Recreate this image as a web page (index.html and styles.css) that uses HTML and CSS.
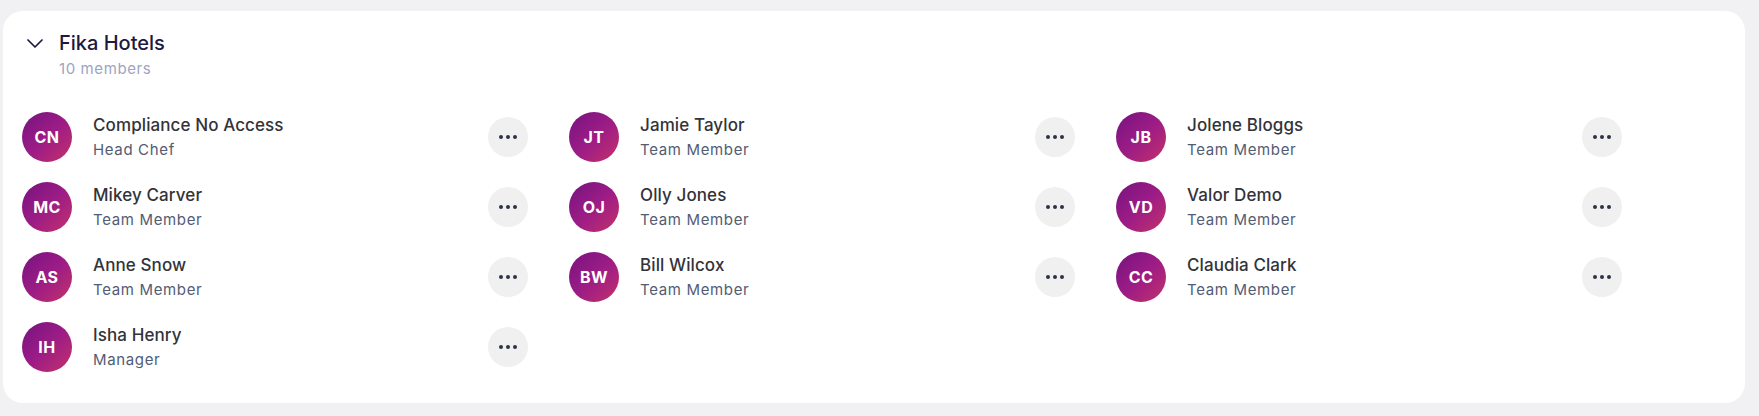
FILE: index.html
```html
<!DOCTYPE html>
<html lang="en">
<head>
  <meta charset="UTF-8">
  <meta name="viewport" content="width=device-width, initial-scale=1.0">
  <title>Fika Hotels - Members</title>
  <link rel="stylesheet" href="styles.css">
</head>
<body>
  <div class="card">
    <div class="group-head">
      <svg class="chevron" width="16" height="9" viewBox="0 0 16 9">
        <path d="M1 1 L8 8 L15 1" fill="none" stroke="#1f1840" stroke-width="1.7" stroke-linecap="round" stroke-linejoin="round"/>
      </svg>
      <div>
        <div class="group-title">Fika Hotels</div>
        <div class="group-count">10 members</div>
      </div>
    </div>

    <div class="members">
      <div class="member">
        <div class="avatar">CN</div>
        <div class="info">
          <div class="name">Compliance No Access</div>
          <div class="role">Head Chef</div>
        </div>
        <button class="more"><span></span><span></span><span></span></button>
      </div>
      <div class="member">
        <div class="avatar">JT</div>
        <div class="info">
          <div class="name">Jamie Taylor</div>
          <div class="role">Team Member</div>
        </div>
        <button class="more"><span></span><span></span><span></span></button>
      </div>
      <div class="member">
        <div class="avatar">JB</div>
        <div class="info">
          <div class="name">Jolene Bloggs</div>
          <div class="role">Team Member</div>
        </div>
        <button class="more"><span></span><span></span><span></span></button>
      </div>

      <div class="member">
        <div class="avatar">MC</div>
        <div class="info">
          <div class="name">Mikey Carver</div>
          <div class="role">Team Member</div>
        </div>
        <button class="more"><span></span><span></span><span></span></button>
      </div>
      <div class="member">
        <div class="avatar">OJ</div>
        <div class="info">
          <div class="name">Olly Jones</div>
          <div class="role">Team Member</div>
        </div>
        <button class="more"><span></span><span></span><span></span></button>
      </div>
      <div class="member">
        <div class="avatar">VD</div>
        <div class="info">
          <div class="name">Valor Demo</div>
          <div class="role">Team Member</div>
        </div>
        <button class="more"><span></span><span></span><span></span></button>
      </div>

      <div class="member">
        <div class="avatar">AS</div>
        <div class="info">
          <div class="name">Anne Snow</div>
          <div class="role">Team Member</div>
        </div>
        <button class="more"><span></span><span></span><span></span></button>
      </div>
      <div class="member">
        <div class="avatar">BW</div>
        <div class="info">
          <div class="name">Bill Wilcox</div>
          <div class="role">Team Member</div>
        </div>
        <button class="more"><span></span><span></span><span></span></button>
      </div>
      <div class="member">
        <div class="avatar">CC</div>
        <div class="info">
          <div class="name">Claudia Clark</div>
          <div class="role">Team Member</div>
        </div>
        <button class="more"><span></span><span></span><span></span></button>
      </div>

      <div class="member">
        <div class="avatar">IH</div>
        <div class="info">
          <div class="name">Isha Henry</div>
          <div class="role">Manager</div>
        </div>
        <button class="more"><span></span><span></span><span></span></button>
      </div>
    </div>
  </div>
</body>
</html>
```

FILE: styles.css
```css
body {
  margin: 0;
  background: #f1f1f3;
  font-family: 'Inter', 'Noto Sans', sans-serif;
}
.card {
  margin: 11px 14px 14px 3px;
  padding: 20px 20px 31px 19px;
  background: #fff;
  border-radius: 20px;
}
.group-head {
  display: flex;
  align-items: flex-start;
  gap: 16px;
  padding-left: 5px;
}
.chevron {
  margin-top: 8px;
}
.group-title {
  font-size: 20px;
  line-height: 24px;
  font-weight: 500;
  color: #1f1840;
}
.group-count {
  margin-top: 5px;
  font-size: 15px;
  line-height: 18px;
  color: #9ea3c4;
  letter-spacing: 0.6px;
}
.members {
  margin-top: 34px;
  display: grid;
  grid-template-columns: repeat(3, 506px);
  column-gap: 41px;
  row-gap: 20px;
}
.member {
  display: flex;
  align-items: center;
}
.avatar {
  width: 50px;
  height: 50px;
  border-radius: 50%;
  background: linear-gradient(135deg, #76137f 0%, #9c1c86 50%, #c4326a 100%);
  color: #fff;
  font-weight: 700;
  font-size: 16px;
  letter-spacing: 0.5px;
  display: flex;
  align-items: center;
  justify-content: center;
  flex-shrink: 0;
}
.info {
  flex: 1;
  margin-left: 21px;
}
.name {
  font-size: 17px;
  line-height: 20px;
  font-weight: 500;
  color: #333339;
  letter-spacing: 0.1px;
}
.role {
  margin-top: 6px;
  font-size: 15px;
  line-height: 18px;
  color: #525c73;
  letter-spacing: 0.65px;
}
.more {
  width: 40px;
  height: 40px;
  border: none;
  border-radius: 50%;
  background: #f0f0f0;
  display: flex;
  align-items: center;
  justify-content: center;
  gap: 3px;
  padding: 0;
  cursor: pointer;
}
.more span {
  width: 4px;
  height: 4px;
  border-radius: 50%;
  background: #2c3346;
}
```
